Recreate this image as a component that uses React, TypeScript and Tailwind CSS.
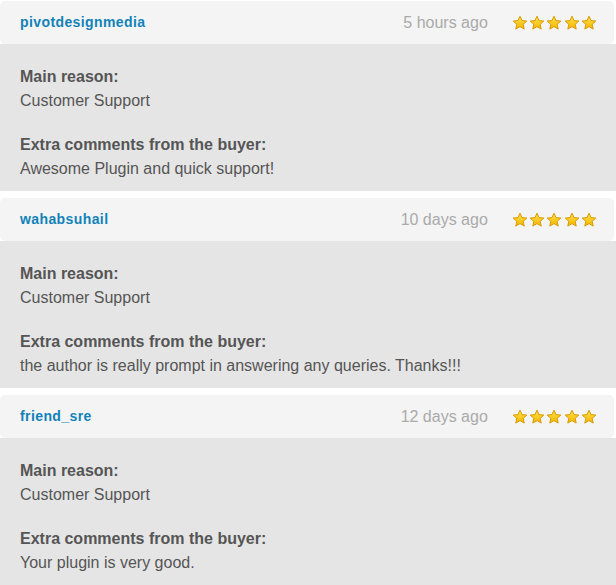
const reviews = [
  {
    user: 'pivotdesignmedia',
    when: '5 hours ago',
    reason: 'Customer Support',
    comment: 'Awesome Plugin and quick support!',
  },
  {
    user: 'wahabsuhail',
    when: '10 days ago',
    reason: 'Customer Support',
    comment: 'the author is really prompt in answering any queries. Thanks!!!',
  },
  {
    user: 'friend_sre',
    when: '12 days ago',
    reason: 'Customer Support',
    comment: 'Your plugin is very good.',
  },
]

function Star() {
  return (
    <svg width="16" height="16" viewBox="0 0 16 16" className="block">
      <defs>
        <linearGradient id="starFill" x1="0" y1="0" x2="0" y2="1">
          <stop offset="0" stopColor="#ffe34d" />
          <stop offset="1" stopColor="#f5b400" />
        </linearGradient>
      </defs>
      <path
        d="M8 1.2 L10 5.6 L14.8 6.1 L11.2 9.3 L12.2 14.1 L8 11.6 L3.8 14.1 L4.8 9.3 L1.2 6.1 L6 5.6 Z"
        fill="url(#starFill)"
        stroke="#d99a00"
        strokeWidth="1"
        strokeLinejoin="round"
      />
    </svg>
  )
}

function Review({ r }: { r: (typeof reviews)[number] }) {
  return (
    <div className="pt-px">
      <div className="h-[43px] flex items-center bg-[#f4f4f4] rounded-[5px] mr-[2px] pl-5 pr-[17px]">
        <span className="text-[14px] font-bold tracking-[0.4px] text-[#1182b8]">{r.user}</span>
        <span className="ml-auto text-[16px] text-[#aaaaaa]">{r.when}</span>
        <div className="flex gap-[1.3px] ml-6">
          {[0, 1, 2, 3, 4].map((i) => (
            <Star key={i} />
          ))}
        </div>
      </div>
      <div className="bg-[#e5e5e5] pt-[21px] pb-[10px] px-5 text-[16px] leading-6 text-[#555555]">
        <div className="font-bold">Main reason:</div>
        <div>{r.reason}</div>
        <div className="font-bold mt-5">Extra comments from the buyer:</div>
        <div>{r.comment}</div>
      </div>
    </div>
  )
}

export default function App() {
  return (
    <div className="w-[616px] h-[585px] bg-white font-['Liberation_Sans',Arial,sans-serif] flex flex-col gap-[6px] overflow-hidden">
      {reviews.map((r) => (
        <Review key={r.user} r={r} />
      ))}
    </div>
  )
}
